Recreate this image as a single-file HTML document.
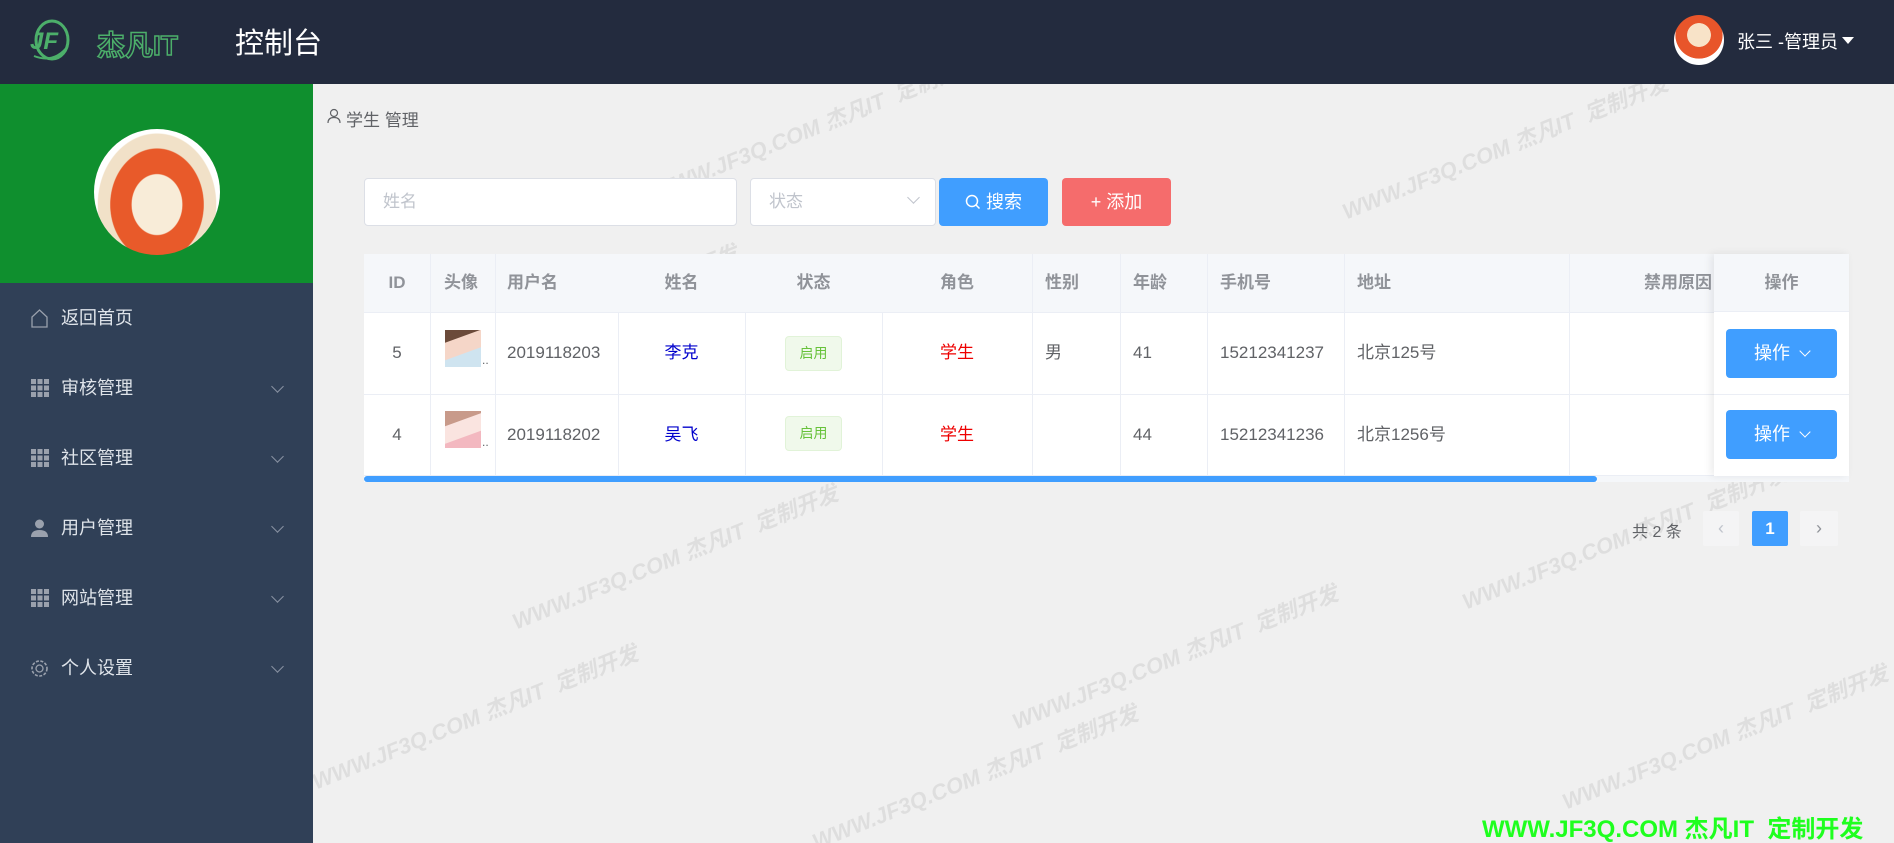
<!DOCTYPE html>
<html><head><meta charset="utf-8">
<style>
*{margin:0;padding:0;box-sizing:border-box}
html,body{width:1894px;height:843px;overflow:hidden}
body{background:#f0f0f0;font-family:"Liberation Sans","Noto Sans CJK SC",sans-serif;position:relative;color:#606266}
.hdr{position:absolute;left:0;top:0;width:1894px;height:84px;background:#232b3e}
.side{position:absolute;left:0;top:84px;width:313px;height:759px;background:#304057}
.green{position:absolute;left:0;top:0;width:313px;height:199px;background:#0f8f2e}
.av{position:absolute;border-radius:50%;background:#fff;overflow:hidden}
.mi{position:absolute;left:0;width:313px;height:40px;color:#dfe4ea;font-size:18px;line-height:40px}
.mi .ic{position:absolute;left:30px;top:11px;width:19px;height:19px}
.mi .t{position:absolute;left:61px}
.mi .ar{position:absolute;left:273px;top:14px;width:9px;height:9px;border-right:1px solid #8a93a3;border-bottom:1px solid #8a93a3;transform:rotate(45deg)}
.wm{position:absolute;color:rgba(0,0,0,0.075);font-size:22px;font-weight:bold;transform:rotate(-22deg);white-space:nowrap;font-style:italic}
.tbl{position:absolute;left:364px;top:254px;width:1485px;height:228px;background:#fff}
.th{position:absolute;top:0;height:58px;line-height:58px;background:#f5f7fa;font-size:17px;font-weight:bold;color:#909399}
.cell{position:absolute;font-size:17px;color:#606266;height:40px;line-height:40px;white-space:nowrap}
.r1{top:333px}.r2{top:415px}
.vl{position:absolute;top:0;width:1px;height:222px;background:#ebeef5}
.hl{position:absolute;left:0;height:1px;width:1485px;background:#ebeef5}
.tag{position:absolute;left:785px;width:57px;height:35px;background:#f0f9eb;border:1px solid #e1f3d8;border-radius:4px;color:#67c23a;font-size:14px;line-height:33px;text-align:center}
.op{position:absolute;left:1726px;width:111px;height:49px;background:#409eff;border-radius:4px;color:#fff;font-size:18px;line-height:49px;text-align:center}
.grd{position:absolute;width:18px;height:18px;left:31px;top:11px;background:repeating-linear-gradient(90deg,#9aa1ad 0 5px,transparent 5px 6.5px);-webkit-mask:repeating-linear-gradient(0deg,#000 0 5px,transparent 5px 6.5px)}
</style></head><body>
<div class="wm" style="left:640px;top:110px">WWW.JF3Q.COM 杰凡IT &nbsp;定制开发</div>
<div class="wm" style="left:1330px;top:130px">WWW.JF3Q.COM 杰凡IT &nbsp;定制开发</div>
<div class="wm" style="left:400px;top:300px">WWW.JF3Q.COM 杰凡IT &nbsp;定制开发</div>
<div class="wm" style="left:1100px;top:320px">WWW.JF3Q.COM 杰凡IT &nbsp;定制开发</div>
<div class="wm" style="left:1450px;top:520px">WWW.JF3Q.COM 杰凡IT &nbsp;定制开发</div>
<div class="wm" style="left:500px;top:540px">WWW.JF3Q.COM 杰凡IT &nbsp;定制开发</div>
<div class="wm" style="left:1000px;top:640px">WWW.JF3Q.COM 杰凡IT &nbsp;定制开发</div>
<div class="wm" style="left:300px;top:700px">WWW.JF3Q.COM 杰凡IT &nbsp;定制开发</div>
<div class="wm" style="left:1550px;top:720px">WWW.JF3Q.COM 杰凡IT &nbsp;定制开发</div>
<div class="wm" style="left:800px;top:760px">WWW.JF3Q.COM 杰凡IT &nbsp;定制开发</div>

<div class="hdr">
 <svg style="position:absolute;left:24px;top:16px" width="64" height="48" viewBox="0 0 64 48"><path d="M10 40 Q30 48 44 30" stroke="#4caf6a" stroke-width="2" fill="none"/><ellipse cx="28" cy="24" rx="16" ry="19" fill="none" stroke="#4caf6a" stroke-width="3"/><text x="6" y="33" font-size="24" font-weight="bold" font-style="italic" fill="#4caf6a" font-family="Liberation Sans">JF</text></svg>
 <div style="position:absolute;left:97px;top:24px;font-size:28px;font-weight:bold;color:#232b3e;-webkit-text-stroke:1.5px #4caf6a">杰凡IT</div>
 <div style="position:absolute;left:235px;top:20px;font-size:29px;color:#fff">控制台</div>
 <div class="av" style="left:1674px;top:15px;width:50px;height:50px;background:radial-gradient(circle at 50% 40%,#f8e3c8 0 30%,#e8552a 31% 60%,#fff 61%)"></div>
 <div style="position:absolute;left:1737px;top:28px;font-size:18px;color:#fff">张三 -管理员</div>
 <div style="position:absolute;left:1842px;top:37px;border-left:6px solid transparent;border-right:6px solid transparent;border-top:7px solid #fff"></div>
</div>

<div class="side">
 <div class="green"><div class="av" style="left:94px;top:45px;width:126px;height:126px;background:radial-gradient(ellipse at 50% 60%,#f8ecd8 0 28%,#e85a2a 29% 52%,#f1e1c8 53% 66%,#fff 67%)"></div></div>
 <div class="mi" style="top:214px"><svg class="ic" viewBox="0 0 19 19"><path d="M2 18 V8 L9.5 1 L17 8 V18 Z" fill="none" stroke="#9aa1ad" stroke-width="1.3"/></svg><span class="t">返回首页</span></div>
 <div class="mi" style="top:284px"><div class="grd"></div><span class="t">审核管理</span><span class="ar"></span></div>
 <div class="mi" style="top:354px"><div class="grd"></div><span class="t">社区管理</span><span class="ar"></span></div>
 <div class="mi" style="top:424px"><svg class="ic" viewBox="0 0 19 19"><circle cx="9.5" cy="5" r="4.5" fill="#9aa1ad"/><path d="M1 18 Q1 11 9.5 11 Q18 11 18 18 Z" fill="#9aa1ad"/></svg><span class="t">用户管理</span><span class="ar"></span></div>
 <div class="mi" style="top:494px"><div class="grd"></div><span class="t">网站管理</span><span class="ar"></span></div>
 <div class="mi" style="top:564px"><svg class="ic" viewBox="0 0 19 19"><circle cx="9.5" cy="9.5" r="7.5" fill="none" stroke="#9aa1ad" stroke-width="1.6" stroke-dasharray="3 1.5"/><circle cx="9.5" cy="9.5" r="3.5" fill="none" stroke="#9aa1ad" stroke-width="1.3"/></svg><span class="t">个人设置</span><span class="ar"></span></div>
</div>

<svg style="position:absolute;left:327px;top:108px" width="14" height="16" viewBox="0 0 14 16"><circle cx="7" cy="5" r="3.5" fill="none" stroke="#606266" stroke-width="1.2"/><path d="M1 15 Q1 9.5 7 9.5 Q13 9.5 13 15" fill="none" stroke="#606266" stroke-width="1.2"/></svg>
<div style="position:absolute;left:346px;top:106px;font-size:17px;color:#606266">学生 管理</div>

<div style="position:absolute;left:364px;top:178px;width:373px;height:48px;background:#fff;border:1px solid #dcdfe6;border-radius:4px;font-size:17px;color:#c0c4cc;line-height:46px;padding-left:18px">姓名</div>
<div style="position:absolute;left:750px;top:178px;width:186px;height:48px;background:#fff;border:1px solid #dcdfe6;border-radius:4px;font-size:17px;color:#c0c4cc;line-height:46px;padding-left:18px">状态<span style="position:absolute;left:158px;top:14px;width:9px;height:9px;border-right:1px solid #c0c4cc;border-bottom:1px solid #c0c4cc;transform:rotate(45deg)"></span></div>
<div style="position:absolute;left:939px;top:178px;width:109px;height:48px;background:#409eff;border-radius:4px;color:#fff;font-size:18px;line-height:48px;text-align:center"><svg width="16" height="16" viewBox="0 0 16 16" style="vertical-align:-2px"><circle cx="7" cy="7" r="5.5" fill="none" stroke="#fff" stroke-width="1.5"/><path d="M11 11 L14.5 14.5" stroke="#fff" stroke-width="1.5"/></svg> 搜索</div>
<div style="position:absolute;left:1062px;top:178px;width:109px;height:48px;background:#f56c6c;border-radius:4px;color:#fff;font-size:18px;line-height:48px;text-align:center">+ 添加</div>

<div class="tbl">
 <div class="th" style="left:0;width:1485px"></div>
 <div class="hl" style="top:58px"></div><div class="hl" style="top:140px"></div><div class="hl" style="top:221px"></div>
 <div class="vl" style="left:66px"></div><div class="vl" style="left:131px"></div><div class="vl" style="left:254px"></div><div class="vl" style="left:381px"></div><div class="vl" style="left:518px"></div><div class="vl" style="left:668px"></div><div class="vl" style="left:756px"></div><div class="vl" style="left:843px"></div><div class="vl" style="left:980px"></div><div class="vl" style="left:1205px"></div>
 <div class="th" style="left:0;width:66px;text-align:center">ID</div>
 <div class="th" style="left:80px">头像</div>
 <div class="th" style="left:143px">用户名</div>
 <div class="th" style="left:254px;width:127px;text-align:center">姓名</div>
 <div class="th" style="left:381px;width:137px;text-align:center">状态</div>
 <div class="th" style="left:518px;width:150px;text-align:center">角色</div>
 <div class="th" style="left:681px">性别</div>
 <div class="th" style="left:769px">年龄</div>
 <div class="th" style="left:856px">手机号</div>
 <div class="th" style="left:993px">地址</div>
 <div class="th" style="left:1280px;width:70px;overflow:hidden;white-space:nowrap">禁用原因</div>
 <div style="position:absolute;left:0;top:222px;width:1233px;height:6px;background:#409eff;border-radius:3px"></div>
 <div style="position:absolute;left:1233px;top:222px;width:252px;height:6px;background:#f5f7fa"></div>
</div>
<div style="position:absolute;left:1714px;top:254px;width:135px;height:222px;background:#fff;box-shadow:-3px 0 8px rgba(0,0,0,0.08)">
 <div style="height:58px;background:#f5f7fa;border-bottom:1px solid #ebeef5;font-size:17px;font-weight:bold;color:#909399;line-height:58px;text-align:center">操作</div>
 <div style="position:absolute;left:0;top:140px;width:135px;height:1px;background:#ebeef5"></div>
</div>
<div class="cell r1" style="left:364px;width:66px;text-align:center">5</div>
<div class="cell r2" style="left:364px;width:66px;text-align:center">4</div>
<div style="position:absolute;left:445px;top:330px;width:36px;height:37px;background:linear-gradient(160deg,#6b4a3a 0 25%,#f5d6c8 26% 60%,#cfe4f0 61%)"></div>
<div style="position:absolute;left:445px;top:411px;width:36px;height:37px;background:linear-gradient(160deg,#c89a8a 0 30%,#fae4e0 31% 65%,#f3b8c0 66%)"></div>
<div class="cell r1" style="left:482px;font-size:12px;top:340px">..</div><div class="cell r2" style="left:482px;font-size:12px;top:422px">..</div>
<div class="cell r1" style="left:507px">2019118203</div>
<div class="cell r2" style="left:507px">2019118202</div>
<div class="cell r1" style="left:618px;width:127px;text-align:center;color:#0000cc">李克</div>
<div class="cell r2" style="left:618px;width:127px;text-align:center;color:#0000cc">吴飞</div>
<div class="tag" style="top:336px">启用</div>
<div class="tag" style="top:416px">启用</div>
<div class="cell r1" style="left:882px;width:150px;text-align:center;color:#e00">学生</div>
<div class="cell r2" style="left:882px;width:150px;text-align:center;color:#e00">学生</div>
<div class="cell r1" style="left:1045px">男</div>
<div class="cell r1" style="left:1133px">41</div>
<div class="cell r2" style="left:1133px">44</div>
<div class="cell r1" style="left:1220px">15212341237</div>
<div class="cell r2" style="left:1220px">15212341236</div>
<div class="cell r1" style="left:1357px">北京125号</div>
<div class="cell r2" style="left:1357px">北京1256号</div>
<div class="op" style="top:329px">操作 <span style="display:inline-block;width:8px;height:8px;border-right:1.5px solid #fff;border-bottom:1.5px solid #fff;transform:rotate(45deg);margin:0 0 4px 6px"></span></div>
<div class="op" style="top:410px">操作 <span style="display:inline-block;width:8px;height:8px;border-right:1.5px solid #fff;border-bottom:1.5px solid #fff;transform:rotate(45deg);margin:0 0 4px 6px"></span></div>

<div style="position:absolute;left:1632px;top:518px;font-size:16px;color:#606266">共 2 条</div>
<div style="position:absolute;left:1703px;top:511px;width:36px;height:35px;background:#f4f4f5;border-radius:2px;color:#c0c4cc;text-align:center;line-height:35px;font-size:18px">‹</div>
<div style="position:absolute;left:1752px;top:511px;width:36px;height:35px;background:#409eff;border-radius:2px;color:#fff;text-align:center;line-height:35px;font-size:17px;font-weight:bold">1</div>
<div style="position:absolute;left:1800px;top:511px;width:38px;height:35px;background:#f4f4f5;border-radius:2px;color:#909399;text-align:center;line-height:35px;font-size:18px">›</div>

<div style="position:absolute;left:1482px;top:809px;font-size:24px;font-weight:bold;color:#1eff1e;white-space:nowrap">WWW.JF3Q.COM 杰凡IT &nbsp;定制开发</div>
</body></html>
